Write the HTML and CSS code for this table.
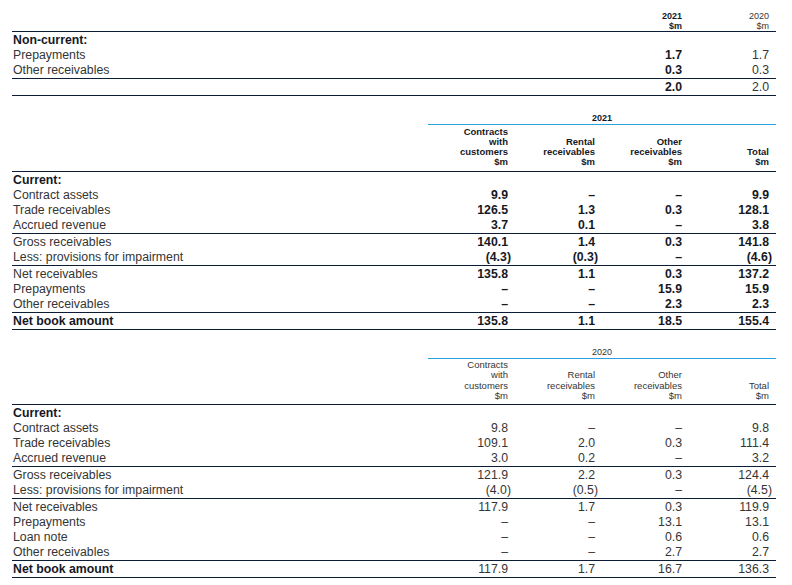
FILE: index.html
```html
<!DOCTYPE html>
<html lang="en">
<head>
<meta charset="utf-8">
<title>Receivables</title>
<link rel="stylesheet" href="styles.css">
</head>
<body>
<div class="page">
  <section class="tbl">
    <div class="row c2 hdr1">
      <div></div>
      <div class="v b">2021<br>$m</div>
      <div class="v">2020<br>$m</div>
    </div>
    <div class="grp">
      <div class="row c2 r"><div class="lbl b">Non-current:</div><div></div><div></div></div>
      <div class="row c2 r"><div class="lbl">Prepayments</div><div class="v b">1.7</div><div class="v">1.7</div></div>
      <div class="row c2 r"><div class="lbl">Other receivables</div><div class="v b">0.3</div><div class="v">0.3</div></div>
    </div>
    <div class="grp">
      <div class="row c2 r"><div class="lbl"></div><div class="v b">2.0</div><div class="v">2.0</div></div>
    </div>
  </section>

  <section class="tbl sec bold">
    <div class="row c4 ttl"><div></div><div class="title">2021</div></div>
    <div class="row c4 colhdr">
      <div></div>
      <div class="v">Contracts<br>with<br>customers<br>$m</div>
      <div class="v">Rental<br>receivables<br>$m</div>
      <div class="v">Other<br>receivables<br>$m</div>
      <div class="v">Total<br>$m</div>
    </div>
    <div class="grp">
      <div class="row c4 r"><div class="lbl hb">Current:</div><div></div><div></div><div></div><div></div></div>
      <div class="row c4 r"><div class="lbl">Contract assets</div><div class="v">9.9</div><div class="v">–</div><div class="v">–</div><div class="v">9.9</div></div>
      <div class="row c4 r"><div class="lbl">Trade receivables</div><div class="v">126.5</div><div class="v">1.3</div><div class="v">0.3</div><div class="v">128.1</div></div>
      <div class="row c4 r"><div class="lbl">Accrued revenue</div><div class="v">3.7</div><div class="v">0.1</div><div class="v">–</div><div class="v">3.8</div></div>
    </div>
    <div class="grp">
      <div class="row c4 r"><div class="lbl">Gross receivables</div><div class="v">140.1</div><div class="v">1.4</div><div class="v">0.3</div><div class="v">141.8</div></div>
      <div class="row c4 r"><div class="lbl">Less: provisions for impairment</div><div class="v">(4.3<span class="cp">)</span></div><div class="v">(0.3<span class="cp">)</span></div><div class="v">–</div><div class="v">(4.6<span class="cp">)</span></div></div>
    </div>
    <div class="grp">
      <div class="row c4 r"><div class="lbl">Net receivables</div><div class="v">135.8</div><div class="v">1.1</div><div class="v">0.3</div><div class="v">137.2</div></div>
      <div class="row c4 r"><div class="lbl">Prepayments</div><div class="v">–</div><div class="v">–</div><div class="v">15.9</div><div class="v">15.9</div></div>
      <div class="row c4 r"><div class="lbl">Other receivables</div><div class="v">–</div><div class="v">–</div><div class="v">2.3</div><div class="v">2.3</div></div>
    </div>
    <div class="grp">
      <div class="row c4 r"><div class="lbl hb">Net book amount</div><div class="v">135.8</div><div class="v">1.1</div><div class="v">18.5</div><div class="v">155.4</div></div>
    </div>
  </section>

  <section class="tbl sec">
    <div class="row c4 ttl"><div></div><div class="title">2020</div></div>
    <div class="row c4 colhdr">
      <div></div>
      <div class="v">Contracts<br>with<br>customers<br>$m</div>
      <div class="v">Rental<br>receivables<br>$m</div>
      <div class="v">Other<br>receivables<br>$m</div>
      <div class="v">Total<br>$m</div>
    </div>
    <div class="grp">
      <div class="row c4 r"><div class="lbl hb">Current:</div><div></div><div></div><div></div><div></div></div>
      <div class="row c4 r"><div class="lbl">Contract assets</div><div class="v">9.8</div><div class="v">–</div><div class="v">–</div><div class="v">9.8</div></div>
      <div class="row c4 r"><div class="lbl">Trade receivables</div><div class="v">109.1</div><div class="v">2.0</div><div class="v">0.3</div><div class="v">111.4</div></div>
      <div class="row c4 r"><div class="lbl">Accrued revenue</div><div class="v">3.0</div><div class="v">0.2</div><div class="v">–</div><div class="v">3.2</div></div>
    </div>
    <div class="grp">
      <div class="row c4 r"><div class="lbl">Gross receivables</div><div class="v">121.9</div><div class="v">2.2</div><div class="v">0.3</div><div class="v">124.4</div></div>
      <div class="row c4 r"><div class="lbl">Less: provisions for impairment</div><div class="v">(4.0<span class="cp">)</span></div><div class="v">(0.5<span class="cp">)</span></div><div class="v">–</div><div class="v">(4.5<span class="cp">)</span></div></div>
    </div>
    <div class="grp">
      <div class="row c4 r"><div class="lbl">Net receivables</div><div class="v">117.9</div><div class="v">1.7</div><div class="v">0.3</div><div class="v">119.9</div></div>
      <div class="row c4 r"><div class="lbl">Prepayments</div><div class="v">–</div><div class="v">–</div><div class="v">13.1</div><div class="v">13.1</div></div>
      <div class="row c4 r"><div class="lbl">Loan note</div><div class="v">–</div><div class="v">–</div><div class="v">0.6</div><div class="v">0.6</div></div>
      <div class="row c4 r"><div class="lbl">Other receivables</div><div class="v">–</div><div class="v">–</div><div class="v">2.7</div><div class="v">2.7</div></div>
    </div>
    <div class="grp">
      <div class="row c4 r"><div class="lbl hb">Net book amount</div><div class="v">117.9</div><div class="v">1.7</div><div class="v">16.7</div><div class="v">136.3</div></div>
    </div>
  </section>
</div>
</body>
</html>
```

FILE: styles.css
```css
html, body {
  margin: 0;
  padding: 0;
  background: #ffffff;
}
body {
  font-family: "Liberation Sans", Arial, Helvetica, sans-serif;
  color: #353535;
}
.page {
  margin: 0 16px 0 12px;
}
.row {
  display: grid;
  align-items: end;
}
.c2 {
  grid-template-columns: 1fr 87px 87px;
}
.c4 {
  grid-template-columns: 1fr repeat(4, 87px);
}
.v {
  text-align: right;
  padding-right: 7px;
}
.b, .hb, .bold .v {
  font-weight: bold;
  color: #16181f;
}
.hdr1 {
  height: 22px;
  padding-top: 9px;
  font-size: 9px;
  line-height: 9.5px;
  border-bottom: 1px solid #0c1d36;
}
.grp {
  padding-top: 1px;
  border-bottom: 1px solid #0c1d36;
}
.r {
  font-size: 12.3px;
  line-height: 15px;
  white-space: nowrap;
}
.lbl {
  padding-left: 1px;
}
.sec {
  margin-top: 17px;
}
.ttl .title {
  grid-column: 2 / -1;
  text-align: center;
  font-size: 9px;
  line-height: 11px;
  border-bottom: 1px solid #2aa3dc;
}
.bold .ttl .title {
  font-weight: bold;
  color: #16181f;
}
.colhdr {
  padding-top: 1.5px;
  padding-bottom: 3px;
  font-size: 9.5px;
  line-height: 10.3px;
  border-bottom: 1px solid #0c1d36;
}
.cp {
  margin-right: -3px;
}
```
